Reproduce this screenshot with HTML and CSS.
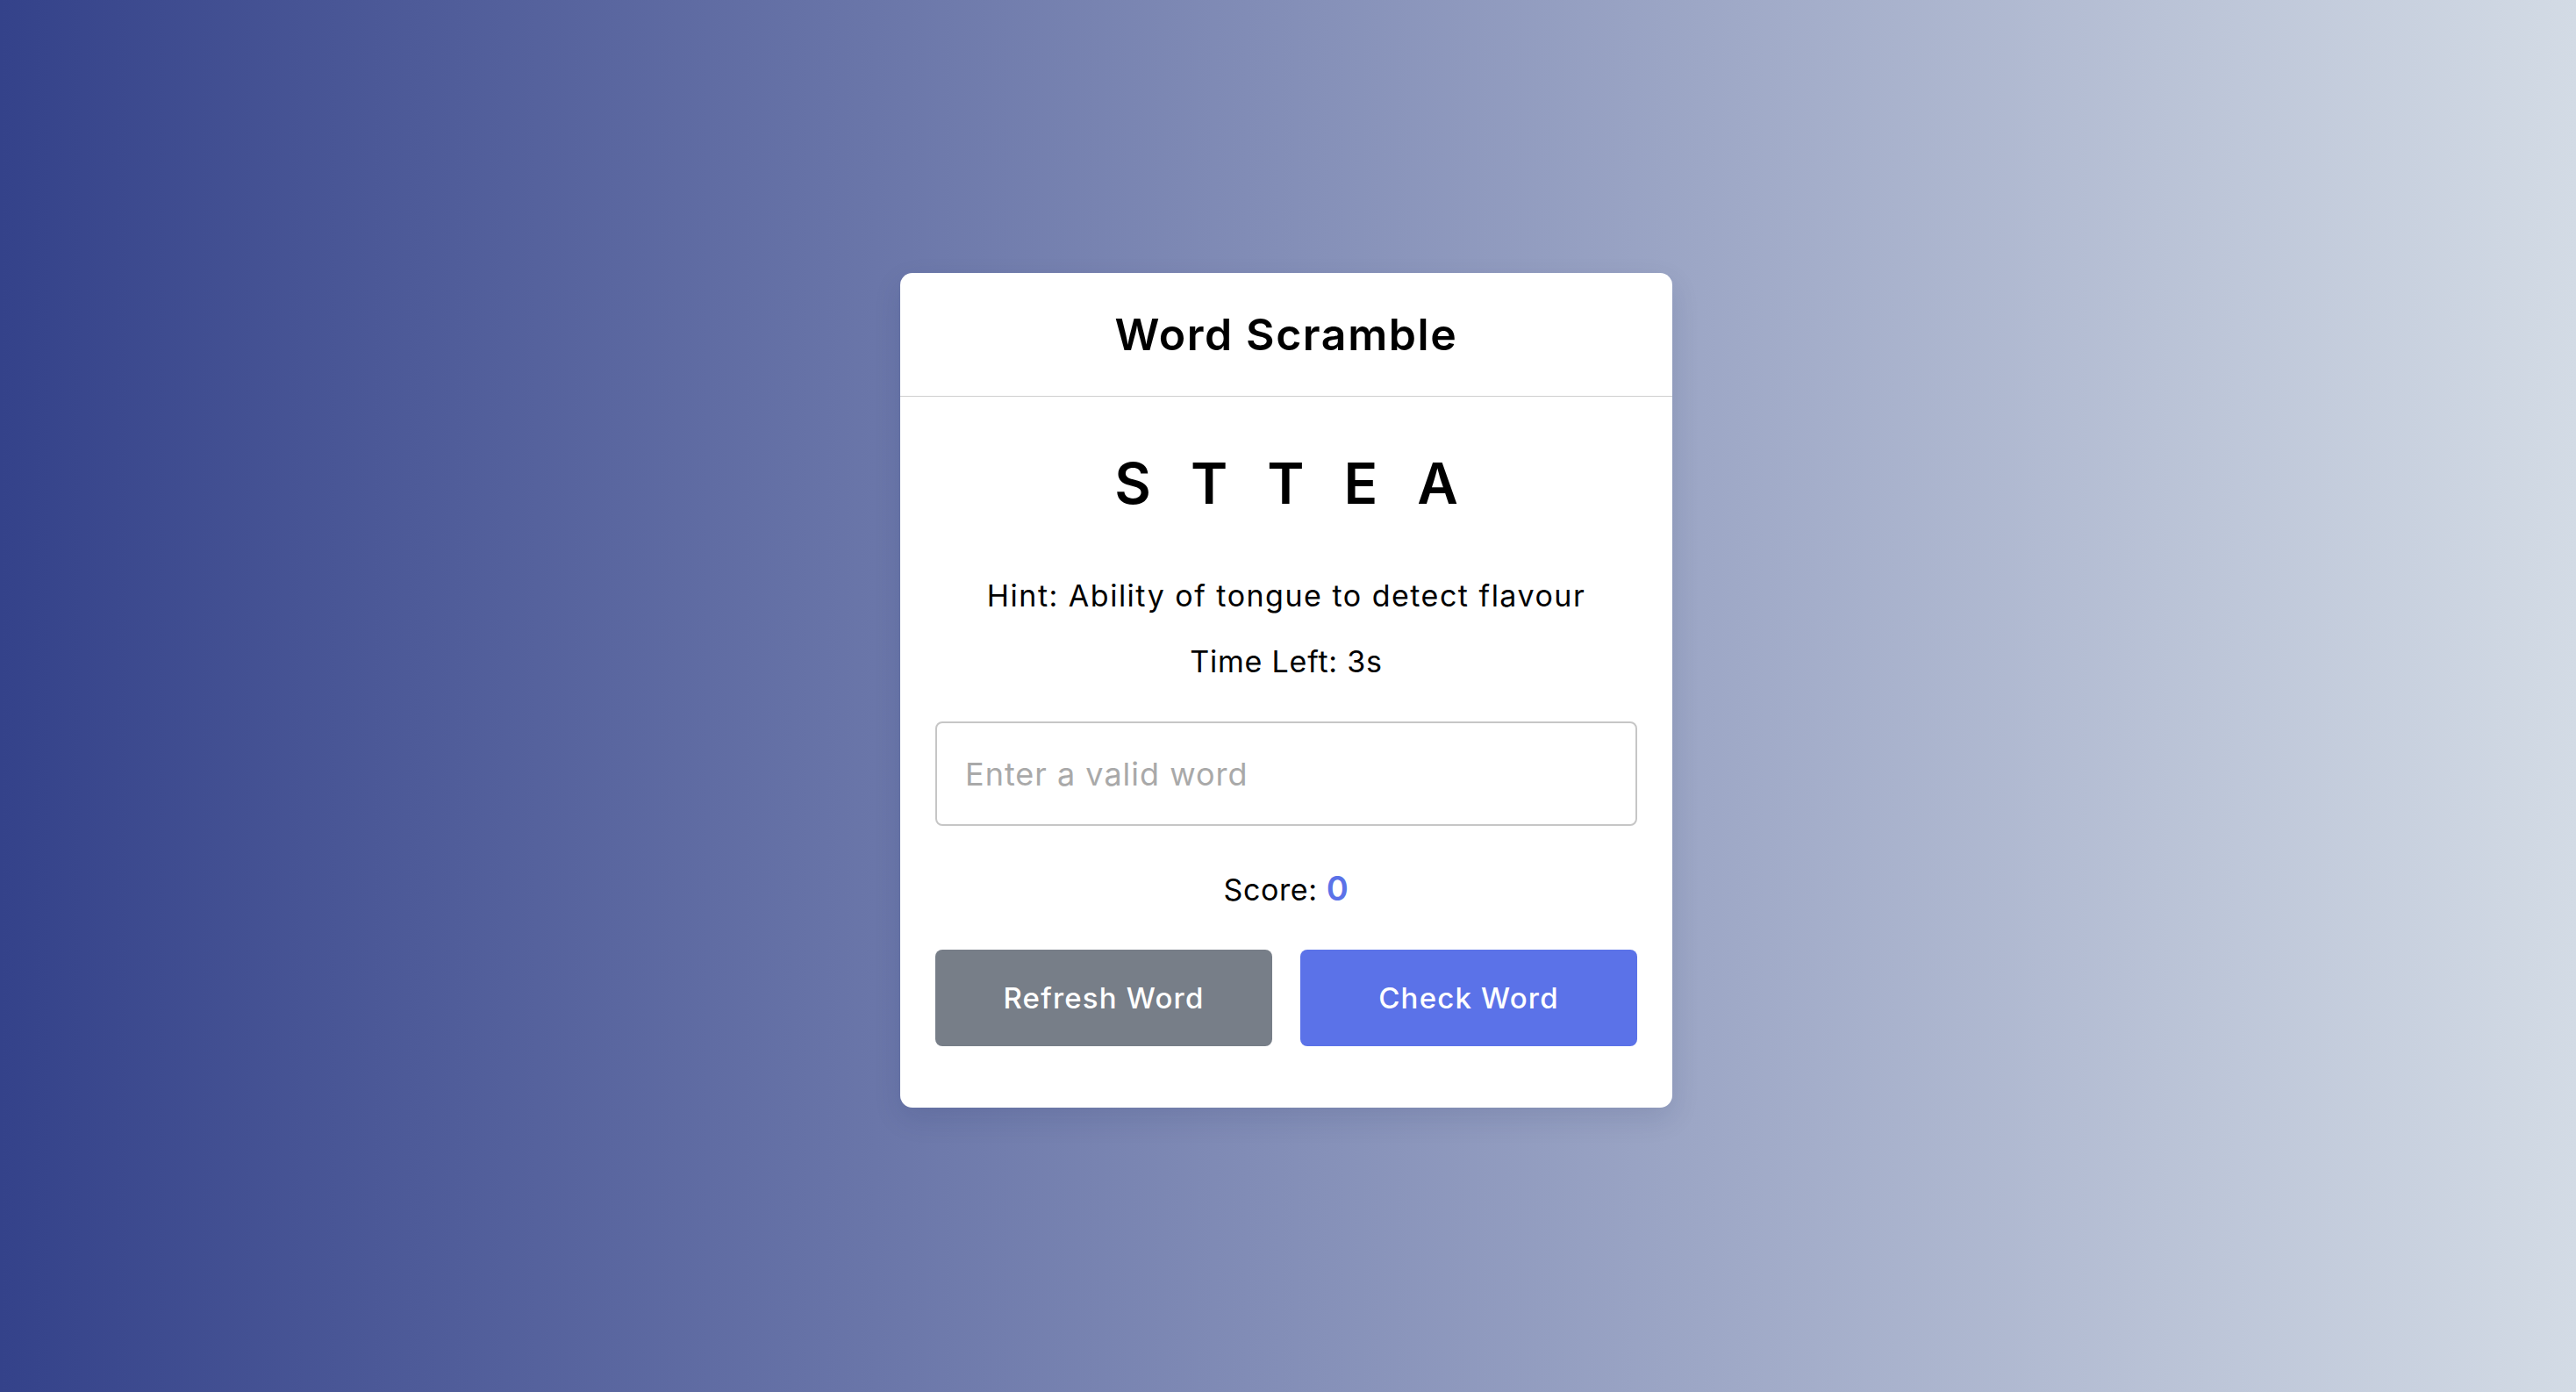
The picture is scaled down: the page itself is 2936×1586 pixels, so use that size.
FILE: index.html
```html
<!DOCTYPE html>
<html lang="en">
<head>
<meta charset="utf-8">
<title>Word Scramble</title>
<link rel="stylesheet" href="styles.css">
</head>
<body>
<main class="page">
  <section class="card">
    <header class="card-header">
      <h1 class="title">Word Scramble</h1>
    </header>
    <div class="card-body">
      <p class="letters">STTEA</p>
      <p class="hint">Hint: Ability of tongue to detect flavour</p>
      <p class="time">Time Left: 3s</p>
      <input class="word-input" type="text" placeholder="Enter a valid word">
      <p class="score">Score: <span class="score-value">0</span></p>
      <div class="buttons">
        <button class="btn btn-refresh">Refresh Word</button>
        <button class="btn btn-check">Check Word</button>
      </div>
    </div>
  </section>
</main>
</body>
</html>
```
FILE: styles.css
```css
* { box-sizing: border-box; }
html, body { margin: 0; padding: 0; }
body {
  font-family: Inter, "Noto Sans", "Liberation Sans", sans-serif;
  color: #000;
}
.page {
  width: 2936px;
  height: 1586px;
  background: linear-gradient(to right, #34428a 0%, #d3dbe5 100%);
  display: flex;
  justify-content: center;
  padding-top: 311px;
  padding-right: 4px;
}
.card {
  width: 880px;
  height: 951px;
  background: #fff;
  border-radius: 14px;
  box-shadow: 0 12px 32px rgba(20, 30, 80, 0.12);
  display: flex;
  flex-direction: column;
}
.card-header {
  height: 141px;
  border-bottom: 1px solid #cfcfcf;
  display: flex;
  align-items: center;
  justify-content: center;
}
.title {
  margin: 0;
  font-size: 50px;
  font-weight: 600;
  line-height: 60px;
  letter-spacing: 1.6px;
}
.card-body {
  padding: 0 40px 68px;
  display: flex;
  flex-direction: column;
  align-items: stretch;
  text-align: center;
}
.letters {
  margin: 59px -45px 0 0;
  height: 80px;
  line-height: 80px;
  font-size: 64px;
  font-weight: 600;
  letter-spacing: 45px;
}
.hint {
  margin: 63px 0 0;
  height: 50px;
  line-height: 50px;
  font-size: 34px;
  font-weight: 400;
  letter-spacing: 1.5px;
}
.time {
  margin: 25px 0 0;
  height: 50px;
  line-height: 50px;
  font-size: 34px;
  font-weight: 400;
  letter-spacing: 0.8px;
}
.word-input {
  margin-top: 43px;
  height: 119px;
  width: 100%;
  border: 2px solid #c6c6c6;
  border-radius: 8px;
  padding: 0 32px;
  font-family: inherit;
  font-size: 36px;
  letter-spacing: 1px;
  color: #000;
  outline: none;
}
.word-input::placeholder { color: #a9a9a9; }
.score {
  margin: 46px 0 0;
  height: 50px;
  line-height: 50px;
  font-size: 34px;
  letter-spacing: 0.6px;
}
.score-value {
  color: #5b72e8;
  font-weight: 600;
  font-size: 38px;
}
.buttons {
  margin-top: 45px;
  display: flex;
  gap: 32px;
}
.btn {
  flex: 1;
  height: 110px;
  border: none;
  border-radius: 8px;
  color: #fff;
  font-family: inherit;
  font-size: 33px;
  font-weight: 500;
  letter-spacing: 1.2px;
}
.btn-refresh { background: #777e88; }
.btn-check { background: #5b72e8; }
```
